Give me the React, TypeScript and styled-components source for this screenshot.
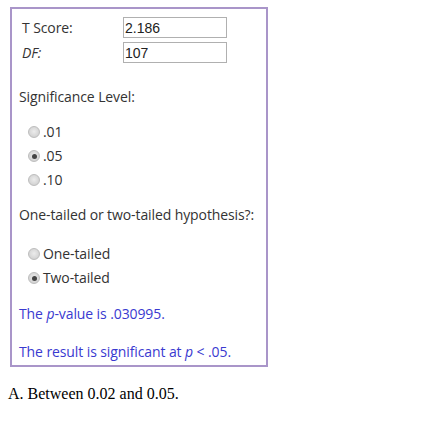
import React from 'react'
import styled, { createGlobalStyle } from 'styled-components'

const GlobalStyle = createGlobalStyle`
  body {
    margin: 0;
    background: #ffffff;
  }
`

const Page = styled.div`
  padding: 7px 0 0 10px;
`

const Panel = styled.div`
  width: 254px;
  height: 356px;
  border: 2px solid #a995c9;
  font-family: 'Open Sans', 'Liberation Sans', sans-serif;
  font-size: 14px;
  letter-spacing: -0.1px;
  color: #333333;
  display: flex;
  flex-direction: column;
`

const FieldGrid = styled.div`
  display: grid;
  grid-template-columns: 101px 104px;
  row-gap: 4px;
  padding: 8px 0 0 10px;
`

const FieldLabel = styled.label<{ $italic?: boolean }>`
  font-style: ${(p) => (p.$italic ? 'italic' : 'normal')};
  height: 21px;
  line-height: 21px;
`

const Field = styled.input`
  box-sizing: border-box;
  width: 104px;
  height: 21px;
  border: 1px solid #b0b0b0;
  font-family: 'Liberation Sans', Arial, sans-serif;
  font-size: 14px;
  color: #222;
  padding: 0 0 0 1px;
  margin: 0;
`

const Heading = styled.div<{ $top: number }>`
  margin-top: ${(p) => p.$top}px;
  padding-left: 7px;
  height: 18px;
  line-height: 18px;
  white-space: nowrap;
`

const Options = styled.div<{ $top: number }>`
  margin-top: ${(p) => p.$top}px;
  padding-left: 16px;
  display: flex;
  flex-direction: column;
  gap: 6px;
`

const Option = styled.div`
  display: flex;
  align-items: center;
  height: 18px;
  line-height: 18px;
`

const Radio = styled.span<{ $on?: boolean }>`
  box-sizing: border-box;
  width: 12px;
  height: 12px;
  border-radius: 50%;
  border: 1px solid #bdbdbd;
  background: radial-gradient(circle at 50% 45%, #ececec 0%, #d4d4d4 70%, #c8c8c8 100%);
  margin-right: 3px;
  display: flex;
  align-items: center;
  justify-content: center;
  &::after {
    content: '';
    width: 5px;
    height: 5px;
    border-radius: 50%;
    background: ${(p) => (p.$on ? '#444444' : 'transparent')};
  }
`

const Result = styled.div<{ $top: number }>`
  margin-top: ${(p) => p.$top}px;
  padding-left: 7px;
  color: #3a3ad0;
  height: 18px;
  line-height: 18px;
  white-space: nowrap;
`

const Answer = styled.p`
  margin: 18px 0 0 -2px;
  font-family: 'Liberation Serif', 'Times New Roman', serif;
  font-size: 16px;
  line-height: 18px;
  color: #000;
`

export default function App() {
  return (
    <>
      <GlobalStyle />
      <Page>
        <Panel>
          <FieldGrid>
            <FieldLabel>T Score:</FieldLabel>
            <Field defaultValue="2.186" />
            <FieldLabel $italic>DF:</FieldLabel>
            <Field defaultValue="107" />
          </FieldGrid>
          <Heading $top={25}>Significance Level:</Heading>
          <Options $top={17}>
            <Option>
              <Radio />
              .01
            </Option>
            <Option>
              <Radio $on />
              .05
            </Option>
            <Option>
              <Radio />
              .10
            </Option>
          </Options>
          <Heading $top={17}>One-tailed or two-tailed hypothesis?:</Heading>
          <Options $top={21}>
            <Option>
              <Radio />
              One-tailed
            </Option>
            <Option>
              <Radio $on />
              Two-tailed
            </Option>
          </Options>
          <Result $top={18}>
            The <i>p</i>-value is .030995.
          </Result>
          <Result $top={20}>
            The result is significant at <i>p</i> &lt; .05.
          </Result>
        </Panel>
        <Answer>A. Between 0.02 and 0.05.</Answer>
      </Page>
    </>
  )
}
